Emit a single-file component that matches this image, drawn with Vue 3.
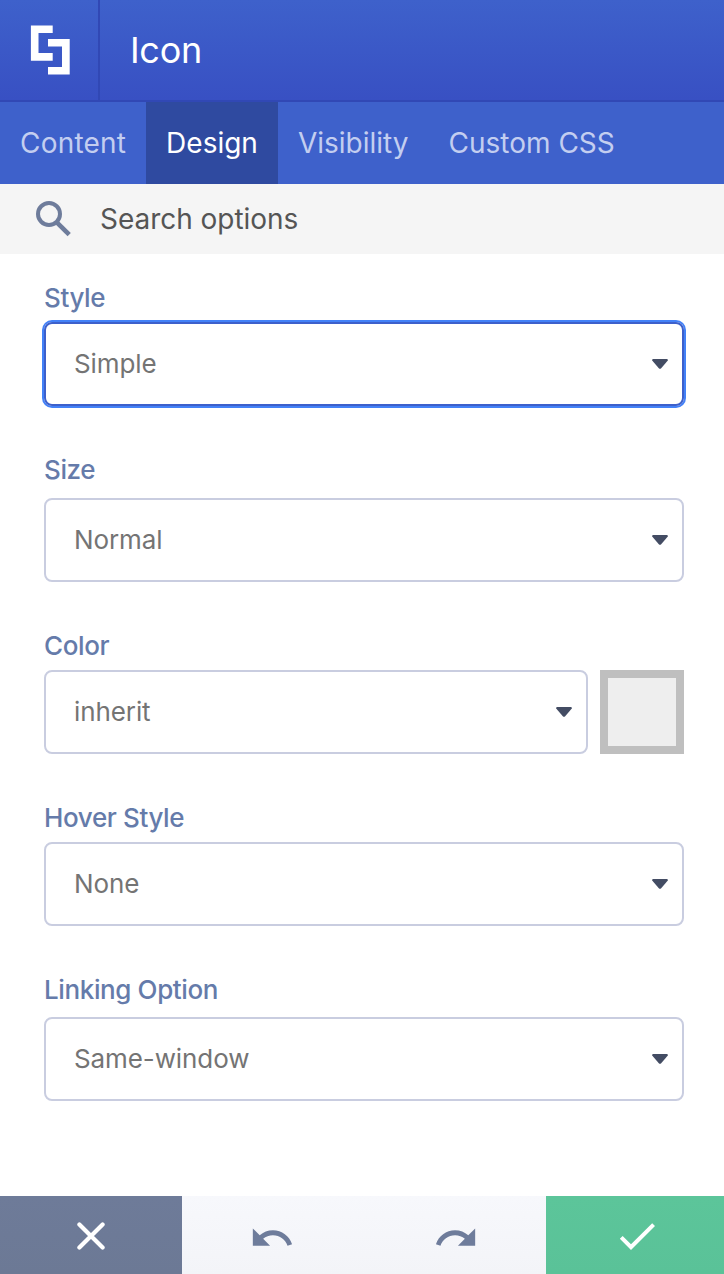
<script setup>
import { ref } from 'vue'

const tabs = ['Content', 'Design', 'Visibility', 'Custom CSS']
const activeTab = ref('Design')

const activeField = ref('style')
const fields = [
  { id: 'style', label: 'Style', value: 'Simple' },
  { id: 'size', label: 'Size', value: 'Normal' },
  { id: 'color', label: 'Color', value: 'inherit', swatch: true },
  { id: 'hover', label: 'Hover Style', value: 'None' },
  { id: 'linking', label: 'Linking Option', value: 'Same-window' }
]
</script>

<template>
  <div class="panel">
    <header class="header">
      <div class="logo">
        <svg width="40" height="50" viewBox="0 0 40 50" fill="#fff">
          <path d="M.9.4h21.8V8H8.5v20h14.2v7.8H.9z" />
          <path d="M18 14h21.7v35.5H18V42h14V21.4H18z" />
        </svg>
      </div>
      <h1 class="title">Icon</h1>
    </header>

    <nav class="tabs">
      <button
        v-for="tab in tabs"
        :key="tab"
        class="tab"
        :class="{ active: tab === activeTab }"
        @click="activeTab = tab"
      >{{ tab }}</button>
    </nav>

    <div class="search">
      <svg class="search-icon" width="36" height="36" viewBox="0 0 36 36" fill="none" stroke="#6e7c9b">
        <circle cx="14" cy="13" r="11" stroke-width="4" />
        <path d="M22.3 21.8L34.2 33.6" stroke-width="4.6" />
      </svg>
      <span class="search-text">Search options</span>
    </div>

    <main class="fields">
      <div v-for="field in fields" :key="field.id" class="field" :class="field.id">
        <label class="label">{{ field.label }}</label>
        <div class="control">
          <div
            class="select"
            :class="{ focused: field.id === activeField }"
            @click="activeField = field.id"
          >
            <span class="value">{{ field.value }}</span>
            <svg width="16" height="10" viewBox="0 0 16 10" fill="#434c63">
              <path d="M1 0h14q1.5.5.6 1.7L9.2 9.2q-1.2 1.2-2.4 0L.4 1.7Q-.5.5 1 0z" />
            </svg>
          </div>
          <div v-if="field.swatch" class="swatch"></div>
        </div>
      </div>
    </main>

    <footer class="footer">
      <button class="cancel">
        <svg width="28" height="28" viewBox="0 0 28 28" stroke="#fff" stroke-width="4.2" stroke-linecap="round">
          <path d="M2.4 2.4l23.2 23.2M25.6 2.4L2.4 25.6" />
        </svg>
      </button>
      <div class="history">
        <svg width="46" height="46" viewBox="0 0 24 24" fill="#6e7c9b">
          <path d="M12.5 8c-2.65 0-5.05.99-6.9 2.6L2 7v9h9l-3.62-3.62c1.39-1.16 3.16-1.88 5.12-1.88 3.54 0 6.55 2.31 7.6 5.5l2.37-.78C21.08 11.03 17.15 8 12.5 8z" />
        </svg>
        <svg width="46" height="46" viewBox="0 0 24 24" fill="#6e7c9b">
          <path d="M18.4 10.6C16.55 8.99 14.15 8 11.5 8c-4.65 0-8.58 3.03-9.96 7.22L3.9 16c1.05-3.19 4.05-5.5 7.6-5.5 1.95 0 3.73.72 5.12 1.88L13 16h9V7l-3.6 3.6z" />
        </svg>
      </div>
      <button class="save">
        <svg width="48" height="48" viewBox="0 0 24 24" fill="#fff">
          <path d="M9 16.17L4.83 12l-1.42 1.41L9 19 21 7l-1.41-1.41z" />
        </svg>
      </button>
    </footer>
  </div>
</template>

<style>
body {
  margin: 0;
}
</style>

<style scoped>
.panel {
  display: flex;
  flex-direction: column;
  width: 724px;
  height: 1274px;
  overflow: hidden;
  background: #fff;
  font-family: Inter, "Liberation Sans", sans-serif;
}

button {
  border: 0;
  padding: 0;
  font-family: inherit;
}

svg {
  display: block;
  flex: none;
}

.header {
  display: flex;
  box-sizing: border-box;
  height: 102px;
  border-bottom: 2px solid #3148b5;
  background: linear-gradient(#3e61cb, #3850c3);
}

.logo {
  box-sizing: border-box;
  width: 100px;
  padding: 25px 0 0 30px;
  border-right: 2px solid #3148b5;
}

.title {
  margin: 0 0 0 30px;
  color: #fff;
  font-size: 36px;
  font-weight: 400;
  line-height: 100px;
  letter-spacing: -0.3px;
}

.tabs {
  display: flex;
  height: 82px;
  background: #3e61cb;
}

.tab {
  padding: 0 20px;
  background: none;
  color: #c3cef0;
  font-size: 28px;
  letter-spacing: 0;
  line-height: 82px;
}

.tab:first-child {
  letter-spacing: 0.2px;
}

.tab.active {
  background: #2f4aa0;
  color: #fff;
}

.search {
  display: flex;
  align-items: center;
  height: 70px;
  padding-left: 35px;
  background: #f5f5f5;
}

.search-text {
  margin-left: 29px;
  color: #555;
  font-size: 28px;
  letter-spacing: -0.03px;
}

.fields {
  flex: 1;
  padding: 28px 40px 0 44px;
}

.field {
  margin-bottom: 48px;
}

.label {
  display: block;
  margin-bottom: 8px;
  color: #657baa;
  font-size: 26px;
  font-weight: 500;
  line-height: 32px;
  letter-spacing: -0.38px;
}

.size .label {
  margin-bottom: 12px;
}

.linking .label {
  margin-bottom: 11px;
}

.control {
  display: flex;
  gap: 12px;
}

.select {
  display: flex;
  flex: 1;
  align-items: center;
  justify-content: space-between;
  box-sizing: border-box;
  height: 84px;
  padding: 0 14px 0 28px;
  border: 2px solid #c9cde0;
  border-radius: 8px;
  color: #747474;
  font-size: 26px;
}

.value {
  padding-bottom: 2px;
  letter-spacing: -0.1px;
}

.select.focused {
  border-color: #3d60cb;
  box-shadow: 0 0 0 2px #4381f7;
}

.swatch {
  box-sizing: border-box;
  width: 84px;
  height: 84px;
  border: 8px solid #bfbfbf;
  background: #eee;
}

.footer {
  display: flex;
  height: 78px;
}

.cancel,
.save {
  display: flex;
  flex: none;
  align-items: center;
  justify-content: center;
  width: 182px;
  padding-top: 2px;
}

.cancel {
  background: linear-gradient(#6e7b99, #6c7995);
}

.save {
  background: linear-gradient(#5cc59a, #5ac298);
}

.history {
  display: flex;
  flex: none;
  align-items: center;
  justify-content: center;
  gap: 138px;
  box-sizing: border-box;
  width: 364px;
  padding-top: 5px;
  background: linear-gradient(#f7f8fc, #f3f4f8);
}
</style>
